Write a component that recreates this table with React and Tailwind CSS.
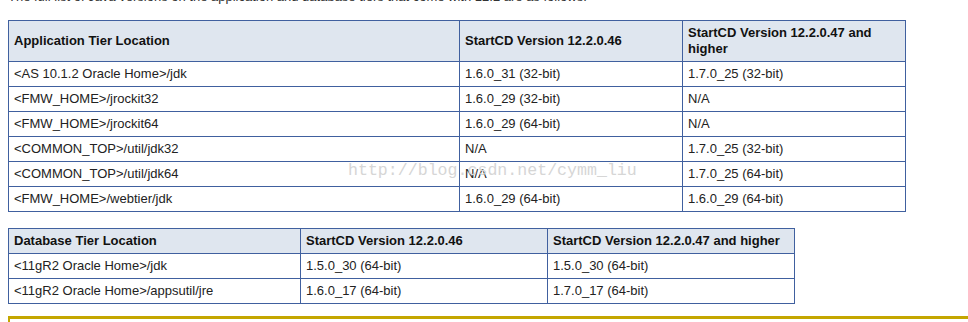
import React from 'react';

const appRows = [
  ['<AS 10.1.2 Oracle Home>/jdk', '1.6.0_31 (32-bit)', '1.7.0_25 (32-bit)'],
  ['<FMW_HOME>/jrockit32', '1.6.0_29 (32-bit)', 'N/A'],
  ['<FMW_HOME>/jrockit64', '1.6.0_29 (64-bit)', 'N/A'],
  ['<COMMON_TOP>/util/jdk32', 'N/A', '1.7.0_25 (32-bit)'],
  ['<COMMON_TOP>/util/jdk64', 'N/A', '1.7.0_25 (64-bit)'],
  ['<FMW_HOME>/webtier/jdk', '1.6.0_29 (64-bit)', '1.6.0_29 (64-bit)'],
];

const dbRows = [
  ['<11gR2 Oracle Home>/jdk', '1.5.0_30 (64-bit)', '1.5.0_30 (64-bit)'],
  ['<11gR2 Oracle Home>/appsutil/jre', '1.6.0_17 (64-bit)', '1.7.0_17 (64-bit)'],
];

const th = 'border border-[#40609f] bg-[#dfe6ef] px-[5px] py-[4px] text-left align-middle font-bold leading-[16px] text-[#111]';
const td = 'border border-[#40609f] px-[5px] py-[4px] text-left align-middle leading-[16px] text-[#222]';

export default function App() {
  return (
    <div className="relative h-[322px] w-[968px] overflow-hidden bg-white text-[13px] font-['Liberation_Sans',Arial,sans-serif]">
      <p className="-mt-[11px] ml-[8px] leading-[16px] text-[#333]">
        The full list of Java versions on the application and database tiers that come with 12.2 are as follows:
      </p>

      <table className="ml-[8px] mt-[15px] w-[897px] table-fixed border-collapse">
        <colgroup>
          <col className="w-[451px]" />
          <col className="w-[223px]" />
          <col className="w-[223px]" />
        </colgroup>
        <thead>
          <tr className="h-[41px]">
            <th className={th}>Application Tier Location</th>
            <th className={th}>StartCD Version 12.2.0.46</th>
            <th className={th}>StartCD Version 12.2.0.47 and higher</th>
          </tr>
        </thead>
        <tbody>
          {appRows.map((r) => (
            <tr key={r[0]} className="h-[25px]">
              {r.map((c, i) => (
                <td key={i} className={td}>{c}</td>
              ))}
            </tr>
          ))}
        </tbody>
      </table>

      <table className="ml-[8px] mt-[16px] w-[786px] table-fixed border-collapse">
        <colgroup>
          <col className="w-[292px]" />
          <col className="w-[247px]" />
          <col className="w-[247px]" />
        </colgroup>
        <thead>
          <tr className="h-[25px]">
            <th className={th}>Database Tier Location</th>
            <th className={th}>StartCD Version 12.2.0.46</th>
            <th className={th}>StartCD Version 12.2.0.47 and higher</th>
          </tr>
        </thead>
        <tbody>
          {dbRows.map((r) => (
            <tr key={r[0]} className="h-[25px]">
              {r.map((c, i) => (
                <td key={i} className={td}>{c}</td>
              ))}
            </tr>
          ))}
        </tbody>
      </table>

      <div className="ml-[8px] mt-[12px] h-[20px] border-l-2 border-t-[3px] border-[#c4a600]" />

      <div className="pointer-events-none absolute left-[348px] top-[161px] font-['Liberation_Mono',monospace] text-[16.6px] leading-[20px] text-[#d6d6d6]">
        http://blog.csdn.net/cymm_liu
      </div>
    </div>
  );
}
